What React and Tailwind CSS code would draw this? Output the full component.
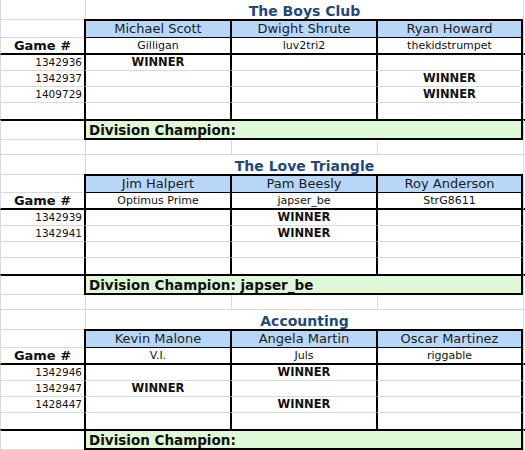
const divisions = [
  {
    title: 'The Boys Club',
    players: [
      ['Michael Scott', 'Gilligan'],
      ['Dwight Shrute', 'luv2tri2'],
      ['Ryan Howard', 'thekidstrumpet'],
    ],
    games: [
      ['1342936', 0],
      ['1342937', 2],
      ['1409729', 2],
      ['', null],
    ],
    champion: '',
  },
  {
    title: 'The Love Triangle',
    players: [
      ['Jim Halpert', 'Optimus Prime'],
      ['Pam Beesly', 'japser_be'],
      ['Roy Anderson', 'StrG8611'],
    ],
    games: [
      ['1342939', 1],
      ['1342941', 1],
      ['', null],
      ['', null],
    ],
    champion: 'japser_be',
  },
  {
    title: 'Accounting',
    players: [
      ['Kevin Malone', 'V.I.'],
      ['Angela Martin', 'Juls'],
      ['Oscar Martinez', 'riggable'],
    ],
    games: [
      ['1342946', 1],
      ['1342947', 0],
      ['1428447', 1],
      ['', null],
    ],
    champion: '',
  },
]

// column widths: A 84, then three bordered columns, the last one closes the box
const colW = ['w-[146px]', 'w-[146px]', 'w-[147px] border-r-2 border-r-black']

function Filler({ className = '' }) {
  return <div className={`flex-1 border-l border-l-[#d9d9d9] ${className}`} />
}

function Section({ d }) {
  return (
    <div className="flex flex-col">
      {/* Title */}
      <div className="flex h-[19px]">
        <div className="w-[84px] border-l border-l-[#d9d9d9]" />
        <div className="ml-[1px] flex w-[438px] items-end justify-center border-l border-l-[#d9d9d9] text-[14px] font-bold leading-[16px] text-[#1f497d]">
          {d.title}
        </div>
        <Filler />
      </div>

      {/* Player names */}
      <div className="flex h-[19px]">
        <div className="w-[84px] border-y border-l border-[#d9d9d9]" />
        {d.players.map((p, i) => (
          <div
            key={p[0]}
            className={`${colW[i]} border-t-2 border-b border-l-2 border-black bg-[#b8d7f8] text-center text-[13px] leading-[16px] text-[#1c1c1c]`}
          >
            {p[0]}
          </div>
        ))}
        <Filler />
      </div>

      {/* Nicknames */}
      <div className="flex h-[17px]">
        <div className="w-[84px] border-b-2 border-l border-b-black border-l-[#d9d9d9] text-center text-[13px] font-bold leading-[15px]">
          Game #
        </div>
        {d.players.map((p, i) => (
          <div
            key={p[1]}
            className={`${colW[i]} border-b-2 border-l-2 border-black text-center text-[11px] leading-[15px]`}
          >
            {p[1]}
          </div>
        ))}
        <Filler className="border-b-2 border-b-black" />
      </div>

      {/* Games */}
      {d.games.map(([num, winner], r) => {
        const last = r === d.games.length - 1
        const line = last ? '' : 'border-b border-b-[#d9d9d9]'
        return (
          <div key={r} className="flex h-[16px]">
            <div className={`w-[84px] border-l border-l-[#d9d9d9] pr-[2px] text-right text-[10.5px] leading-[15px] ${line}`}>
              {num}
            </div>
            {d.players.map((p, i) => (
              <div
                key={p[0]}
                className={`${colW[i]} border-l-2 border-l-black text-center text-[11.5px] font-bold leading-[15px] ${line}`}
              >
                {winner === i ? 'WINNER' : ''}
              </div>
            ))}
            <Filler className={line} />
          </div>
        )
      })}

      {/* Division champion */}
      <div className="flex h-[21px]">
        <div className="w-[84px] border-t-2 border-b border-l border-t-black border-b-[#d9d9d9] border-l-[#d9d9d9]" />
        <div className="w-[439px] border-2 border-black bg-[#dff8d8] pl-[3px] pt-[3px] text-[13.5px] font-bold leading-[13px]">
          Division Champion:{d.champion ? ` ${d.champion}` : ''}
        </div>
        <Filler className="border-t-2 border-t-black" />
      </div>

      {/* Spacer row */}
      <div className="flex h-[15px] border-b border-[#d9d9d9]">
        <div className="w-[84px] border-l border-[#d9d9d9]" />
        <div className="w-[1px]" />
        <div className="w-[146px] border-l border-[#d9d9d9]" />
        <div className="w-[146px] border-l border-[#d9d9d9]" />
        <div className="w-[146px] border-l border-[#d9d9d9]" />
        <Filler />
      </div>
    </div>
  )
}

export default function App() {
  return (
    <div className="h-[450px] w-[525px] overflow-hidden bg-white font-['DejaVu_Sans',Verdana,sans-serif] text-[#111]">
      {divisions.map((d) => (
        <Section key={d.title} d={d} />
      ))}
    </div>
  )
}
